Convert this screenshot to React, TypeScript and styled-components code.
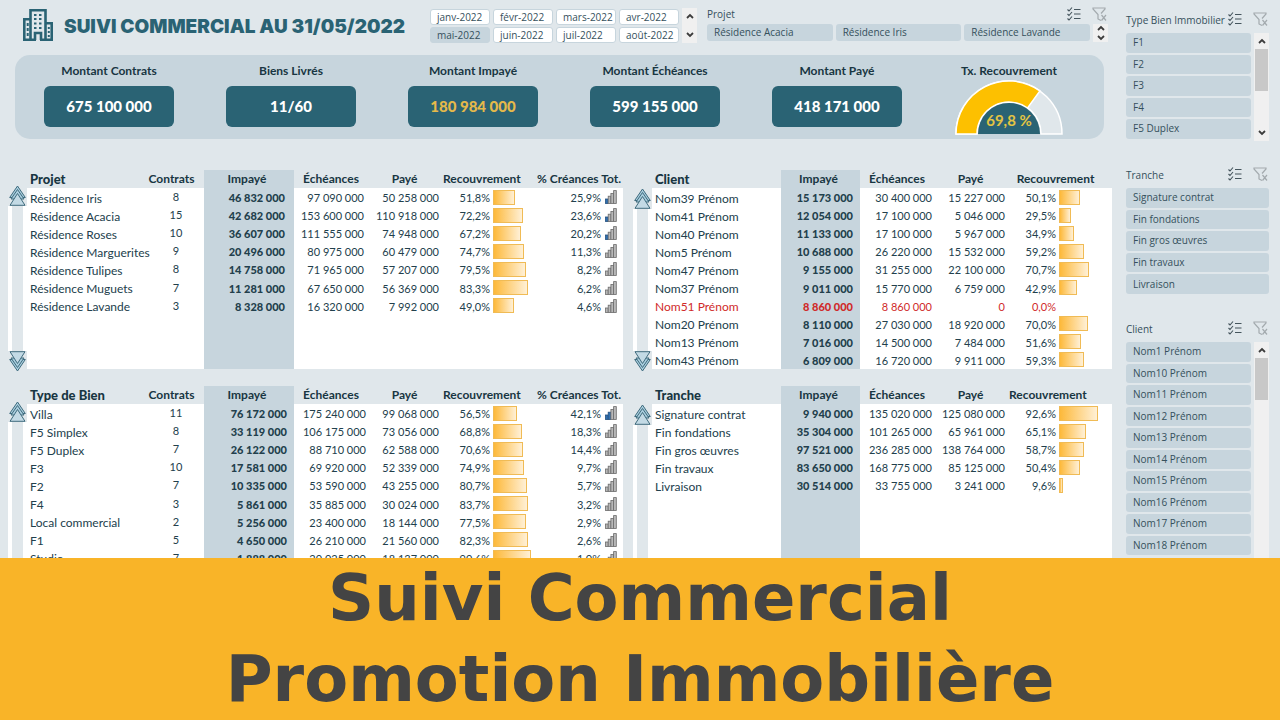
import React from "react";
import styled, { createGlobalStyle, css } from "styled-components";

const c = {
  page: "#e0e7eb",
  panel: "#c7d5dd",
  teal: "#2a6374",
  ink: "#22404c",
  inkStrong: "#183642",
  red: "#d02a2a",
  amber: "#f9b428",
};

const Global = createGlobalStyle`
  *, *::before, *::after { box-sizing: border-box; }
  body { margin: 0; background: ${c.page}; color: ${c.ink}; font-family: Lato, "Liberation Sans", sans-serif; font-size: 12px; }
  button { font: inherit; color: inherit; border: 0; padding: 0; background: none; cursor: pointer; }
  h1, h2, p { margin: 0; }
`;

const Page = styled.div`
  display: flex;
  flex-direction: column;
  height: 100vh;
`;

const Dashboard = styled.div`
  flex: 1;
  min-height: 0;
  overflow: hidden;
  display: flex;
  gap: 14px;
  padding: 0 10px 0 8px;
`;

const Main = styled.main`
  flex: 1;
  min-width: 0;
`;

const Sidebar = styled.aside`
  width: 144px;
  flex: none;
  display: flex;
  flex-direction: column;
  gap: 20px;
  padding-top: 6px;
`;

const TopBar = styled.header`
  display: flex;
  align-items: flex-start;
  gap: 10px;
  height: 55px;
  padding: 4px 3px 0 15px;
`;

const Brand = styled.div`
  flex: 1;
  display: flex;
  align-items: center;
  gap: 11px;
  height: 42px;
`;

const Title = styled.h1`
  font: 900 19px/24px Inter, "Liberation Sans", sans-serif;
  color: ${c.teal};
  white-space: nowrap;
  padding-top: 3px;
`;

const MonthSlicer = styled.section`
  display: flex;
  gap: 3px;
  width: 267px;
  padding-top: 4px;
`;

const MonthGrid = styled.div`
  flex: 1;
  display: grid;
  grid-template-columns: repeat(4, 1fr);
  gap: 2px 3px;
  padding-top: 1px;
`;

const slicerText = css`
  font-family: "Open Sans", "Noto Sans", sans-serif;
  font-size: 10px;
  color: #35505c;
  white-space: nowrap;
`;

const MonthButton = styled.button<{ $active?: boolean }>`
  ${slicerText}
  height: 16px;
  line-height: 14px;
  padding-left: 6px;
  text-align: left;
  border-radius: 3px;
  border: 1px solid ${c.panel};
  background: ${(p) => (p.$active ? c.panel : "#fff")};
`;

const Slicer = styled.section<{ $width?: number }>`
  ${(p) => p.$width && `width: ${p.$width}px;`}
`;

const SlicerHead = styled.div<{ $height: number }>`
  display: flex;
  align-items: center;
  height: ${(p) => p.$height}px;
  padding-right: 1px;
`;

const SlicerTitle = styled.h2`
  ${slicerText}
  flex: 1;
  min-width: 0;
  font-weight: 400;
`;

const SlicerTools = styled.div`
  display: flex;
  gap: 11px;
`;

const IconButton = styled.button`
  display: flex;
`;

const SlicerBody = styled.div<{ $height: number }>`
  display: flex;
  gap: 3px;
  height: ${(p) => p.$height}px;
  overflow: hidden;
  padding-right: 1px;
`;

const SlicerList = styled.div<{ $height: number; $columns?: number }>`
  flex: 1;
  display: grid;
  grid-template-columns: repeat(${(p) => p.$columns ?? 1}, 1fr);
  grid-auto-rows: 1fr;
  gap: 2px 3px;
  height: ${(p) => p.$height}px;
`;

const SlicerItem = styled.button`
  ${slicerText}
  min-height: 0;
  padding: 0 0 1px 7px;
  line-height: 14px;
  text-align: left;
  border-radius: 3px;
  background: ${c.panel};
`;

const ScrollBar = styled.div`
  width: 15px;
  flex: none;
  display: flex;
  flex-direction: column;
  justify-content: space-between;
  background: #f0f0f0;
`;

const ScrollButton = styled.button<{ $tight?: boolean }>`
  display: flex;
  align-items: center;
  justify-content: center;
  height: ${(p) => (p.$tight ? 8 : 16)}px;
`;

const Thumb = styled.div`
  height: 42px;
  background: #c8c8c8;
  margin: 0 1px auto;
`;

const KpiPanel = styled.section`
  display: grid;
  grid-template-columns: repeat(5, 182fr) 162fr;
  height: 84px;
  margin: 0 8px 0 7px;
  padding: 7px 14px 0 3px;
  border-radius: 15px;
  background: ${c.panel};
`;

const Kpi = styled.div`
  display: flex;
  flex-direction: column;
  align-items: center;
`;

const KpiLabel = styled.h2`
  font-size: 12px;
  line-height: 18px;
  font-weight: 700;
  color: ${c.inkStrong};
`;

const KpiValue = styled.p<{ $alert?: boolean }>`
  width: 71%;
  margin-top: 6px;
  border-radius: 6px;
  background: ${c.teal};
  color: ${(p) => (p.$alert ? "#e5b94a" : "#fff")};
  font-size: 15px;
  line-height: 41px;
  font-weight: 900;
  text-align: center;
`;

const Tables = styled.div`
  display: grid;
  grid-template-columns: 615fr 479fr;
  gap: 17px 10px;
  margin-top: 31px;
`;

const Panel = styled.section`
  display: flex;
`;

const Gutter = styled.div<{ $top: number }>`
  width: 19px;
  flex: none;
  display: flex;
  flex-direction: column;
  align-items: center;
  margin: ${(p) => p.$top}px 0 -3px;
`;

const Track = styled.div`
  flex: 1;
  align-self: stretch;
  border: solid #fff;
  border-width: 0 4px;
`;

const ArrowButton = styled.button`
  display: flex;
`;

const DataTable = styled.table`
  flex: 1;
  width: 100%;
  height: 199px;
  table-layout: fixed;
  border-collapse: collapse;
  font-size: 11px;
  line-height: 14px;
`;

const Th = styled.th<{ $align?: string; $shade?: boolean; $padRight?: number; $big?: boolean }>`
  height: 18px;
  padding: 0 ${(p) => p.$padRight ?? 0}px 0 ${(p) => (p.$big ? 3 : 0)}px;
  font-size: ${(p) => (p.$big ? 13 : 12)}px;
  font-weight: ${(p) => (p.$big ? 900 : 700)};
  text-align: ${(p) => p.$align ?? "center"};
  white-space: nowrap;
  color: ${c.inkStrong};
  background: ${(p) => (p.$shade ? c.panel : c.page)};
`;

const Row = styled.tr<{ $alert?: boolean }>`
  color: ${(p) => (p.$alert ? c.red : c.ink)};
`;

const Td = styled.td<{ $align?: string; $padRight?: number }>`
  height: 18px;
  padding: 2px ${(p) => p.$padRight ?? 0}px 0 0;
  text-align: ${(p) => p.$align ?? "right"};
  white-space: nowrap;
  background: #fff;
`;

const NameTd = styled(Td)`
  padding: 3px 0 0 3px;
  font-size: 12px;
  text-align: left;
`;

const CountTd = styled(Td)`
  padding-top: 0;
  text-align: center;
`;

const DueTd = styled(Td)`
  font-weight: 900;
  background: ${c.panel};
`;

const BarTd = styled(Td)`
  padding: 0 0 0 1px;
  text-align: left;
`;

const Bar = styled.div`
  height: 15px;
  border: 1px solid #f0bb55;
  background: linear-gradient(90deg, #fdb93a, #fff0d6);
`;

const Banner = styled.footer`
  flex: none;
  height: 162px;
  background: ${c.amber};
  color: #444;
  text-align: center;
  font: 700 64px/81px "DejaVu Sans", sans-serif;
  white-space: nowrap;
`;

const BuildingIcon = () => (
  <svg width="30" height="32" viewBox="0 0 30 32" fill="none" stroke={c.teal} strokeWidth="2.600" aria-hidden="true">
    <path d="M7.500 30V1.300h15V30M7.500 10.300H1.300V30M22.500 14.300h6.200V30M0 30.700h13M17 30.700h13M12 31v-7h6v7" />
    <path d="M11 5h2.500v2H11zM16 5h2.500v2H16zM11 9h2.500v2H11zM16 9h2.500v2H16zM11 13.500h2.500v2H11zM16 13.500h2.500v2H16zM11 18h2.500v2H11zM16 18h2.500v2H16z" fill={c.teal} stroke="none" />
    <path d="M4.700 14v3M4.700 19v3M4.700 24v3M25.800 18v2M25.800 22v2M25.800 26v2" strokeWidth="2" />
  </svg>
);

const ChecklistIcon = () => (
  <svg width="14" height="14" viewBox="0 0 14 14" fill="none" stroke="#45555d" strokeWidth="1.1" aria-hidden="true">
    <path d="M.5 2.5 2 4 5 .5M.5 7 2 8.500 5 5M.5 11.500 2 13 5 9.500M7 2.500h6.500M7 7h6.500M7 11.500h6.500" />
  </svg>
);

const ClearFilterIcon = () => (
  <svg width="16" height="15" viewBox="0 0 16 15" fill="none" stroke="#a3aaae" strokeWidth="1.200" aria-hidden="true">
    <path d="M9 13.500 6 12V7.500L1 2V1h12v1L9 6.500" />
    <path d="M9.500 8l4.500 5.500M14 8l-4.500 5.500" />
  </svg>
);

const Chevron = ({ down }: { down?: boolean }) => (
  <svg width="8" height="6" viewBox="0 0 8 6" fill="none" stroke="#3c3c3c" strokeWidth="1.800" aria-hidden="true">
    <path d={down ? "M1 1l3 3 3-3" : "M1 5l3-3 3 3"} />
  </svg>
);

const DoubleArrow = ({ down }: { down?: boolean }) => (
  <svg width="17" height="21" viewBox="0 0 17 21" fill="#a9cddd" stroke="#3f6b7d" strokeWidth="1" aria-hidden="true">
    <g transform={down ? "rotate(180 8.500 10.500)" : undefined}>
      <path d="M8.500 1 16.300 12.500H.7z" />
      <path d="M8.500 4.500 15 14H2z" />
      <path d="M8.500 8.500 16 20.300H1z" fill="#c3dae5" />
    </g>
  </svg>
);

const SignalIcon = ({ level }: { level: number }) => (
  <svg width="13" height="14" viewBox="0 0 13 14" strokeWidth=".8" aria-hidden="true" style={{ display: "block" }}>
    {[0, 1, 2, 3].map((i) => (
      <rect
        key={i}
        x={1.5 + i * 2.7}
        y={9 - i * 2.8}
        width="2.700"
        height={4.5 + i * 2.8}
        fill={i < level ? "#2f6fb0" : "#b8b8b8"}
        stroke={i < level ? "#24507f" : "#6c6c6c"}
      />
    ))}
  </svg>
);

const Gauge = () => (
  <svg width="108" height="55" viewBox="0 1 108 55" role="img" aria-label="69,8 %">
    <path d="M1 55a53 53 0 0 1 106 0H86a32 32 0 0 0-64 0z" fill="#e0e7eb" stroke="#fff" strokeWidth="1.500" />
    <path d="M1 55a53 53 0 0 1 83.900-43.100L72.600 29A32 32 0 0 0 22 55z" fill="#fdc000" stroke="#fff" strokeWidth="1.500" />
    <path d="M23 55a31 31 0 0 1 62 0z" fill={c.teal} />
    <text x="54" y="47" textAnchor="middle" fontFamily="Lato, sans-serif" fontWeight="700" fontSize="15" fill="#e3c443">
      69,8 %
    </text>
  </svg>
);

const Scroll = ({ tight, thumb }: { tight?: boolean; thumb?: boolean }) => (
  <ScrollBar>
    <ScrollButton $tight={tight} aria-label="Monter"><Chevron /></ScrollButton>
    {thumb && <Thumb />}
    <ScrollButton $tight={tight} aria-label="Descendre"><Chevron down /></ScrollButton>
  </ScrollBar>
);

type SlicerBoxProps = {
  title: string;
  items: string[];
  headHeight?: number;
  bodyHeight: number;
  listHeight: number;
  columns?: number;
  width?: number;
  scroll?: "tight" | "thumb";
};

const SlicerBox = ({ title, items, headHeight = 27, bodyHeight, listHeight, columns, width, scroll }: SlicerBoxProps) => (
  <Slicer $width={width}>
    <SlicerHead $height={headHeight}>
      <SlicerTitle>{title}</SlicerTitle>
      <SlicerTools>
        <IconButton aria-label="Sélection multiple"><ChecklistIcon /></IconButton>
        <IconButton aria-label="Effacer le filtre"><ClearFilterIcon /></IconButton>
      </SlicerTools>
    </SlicerHead>
    <SlicerBody $height={bodyHeight}>
      <SlicerList $height={listHeight} $columns={columns}>
        {items.map((t, i) => <SlicerItem key={i}>{t}</SlicerItem>)}
      </SlicerList>
      {scroll && <Scroll tight={scroll === "tight"} thumb={scroll === "thumb"} />}
    </SlicerBody>
  </Slicer>
);

type Line = {
  name: string;
  count?: string;
  due: string;
  planned: string;
  paid: string;
  rate: number;
  share?: string;
  level?: number;
};

const line = (name: string, due: string, planned: string, paid: string, rate: number, count?: string, share?: string, level = 0): Line =>
  ({ name, due, planned, paid, rate, count, share, level });

const projects = [
  line("Résidence Iris", "46 832 000", "97 090 000", "50 258 000", 51.8, "8", "25,9%", 1),
  line("Résidence Acacia", "42 682 000", "153 600 000", "110 918 000", 72.2, "15", "23,6%", 1),
  line("Résidence Roses", "36 607 000", "111 555 000", "74 948 000", 67.2, "10", "20,2%", 1),
  line("Résidence Marguerites", "20 496 000", "80 975 000", "60 479 000", 74.7, "9", "11,3%"),
  line("Résidence Tulipes", "14 758 000", "71 965 000", "57 207 000", 79.5, "8", "8,2%"),
  line("Résidence Muguets", "11 281 000", "67 650 000", "56 369 000", 83.3, "7", "6,2%"),
  line("Résidence Lavande", "8 328 000", "16 320 000", "7 992 000", 49, "3", "4,6%"),
];

const clients = [
  line("Nom39 Prénom", "15 173 000", "30 400 000", "15 227 000", 50.1),
  line("Nom41 Prénom", "12 054 000", "17 100 000", "5 046 000", 29.5),
  line("Nom40 Prénom", "11 133 000", "17 100 000", "5 967 000", 34.9),
  line("Nom5 Prénom", "10 688 000", "26 220 000", "15 532 000", 59.2),
  line("Nom47 Prénom", "9 155 000", "31 255 000", "22 100 000", 70.7),
  line("Nom37 Prénom", "9 011 000", "15 770 000", "6 759 000", 42.9),
  line("Nom51 Prénom", "8 860 000", "8 860 000", "0", 0),
  line("Nom20 Prénom", "8 110 000", "27 030 000", "18 920 000", 70),
  line("Nom13 Prénom", "7 016 000", "14 500 000", "7 484 000", 51.6),
  line("Nom43 Prénom", "6 809 000", "16 720 000", "9 911 000", 59.3),
];

const types = [
  line("Villa", "76 172 000", "175 240 000", "99 068 000", 56.5, "11", "42,1%", 2),
  line("F5 Simplex", "33 119 000", "106 175 000", "73 056 000", 68.8, "8", "18,3%"),
  line("F5 Duplex", "26 122 000", "88 710 000", "62 588 000", 70.6, "7", "14,4%"),
  line("F3", "17 581 000", "69 920 000", "52 339 000", 74.9, "10", "9,7%"),
  line("F2", "10 335 000", "53 590 000", "43 255 000", 80.7, "7", "5,7%"),
  line("F4", "5 861 000", "35 885 000", "30 024 000", 83.7, "3", "3,2%"),
  line("Local commercial", "5 256 000", "23 400 000", "18 144 000", 77.5, "2", "2,9%"),
  line("F1", "4 650 000", "26 210 000", "21 560 000", 82.3, "5", "2,6%"),
  line("Studio", "1 888 000", "20 025 000", "18 137 000", 90.6, "7", "1,0%"),
];

const stages = [
  line("Signature contrat", "9 940 000", "135 020 000", "125 080 000", 92.6),
  line("Fin fondations", "35 304 000", "101 265 000", "65 961 000", 65.1),
  line("Fin gros œuvres", "97 521 000", "236 285 000", "138 764 000", 58.7),
  line("Fin travaux", "83 650 000", "168 775 000", "85 125 000", 50.4),
  line("Livraison", "30 514 000", "33 755 000", "3 241 000", 9.6),
];

const ROWS = 10;
const wideCols = [121, 56, 90, 76, 73, 49, 43, 68, 20];
const narrowCols = [129, 79, 76, 73, 49, 54];

type TablePanelProps = { title: string; rows: Line[]; wide?: boolean; duePad?: number; rateAlign?: string };

const TablePanel = ({ title, rows, wide, duePad = 7, rateAlign = "left" }: TablePanelProps) => (
  <Panel>
    <Gutter $top={wide ? 15 : 18}>
      <ArrowButton aria-label="Monter"><DoubleArrow /></ArrowButton>
      <Track />
      <ArrowButton aria-label="Descendre"><DoubleArrow down /></ArrowButton>
    </Gutter>
    <DataTable>
      <colgroup>
        {(wide ? wideCols : narrowCols).map((w, i) => <col key={i} width={w} />)}
      </colgroup>
      <thead>
        <tr>
          <Th $align="left" $big>{title}</Th>
          {wide && <Th $padRight={9}>Contrats</Th>}
          <Th $shade $padRight={4}>Impayé</Th>
          <Th $padRight={2}>Échéances</Th>
          <Th $padRight={4}>Payé</Th>
          <Th colSpan={2} $align={rateAlign} $padRight={10}>Recouvrement</Th>
          {wide && <Th colSpan={2}>% Créances Tot.</Th>}
        </tr>
      </thead>
      <tbody>
        {Array.from({ length: ROWS }, (_, i) => {
          const r = rows[i];
          return (
            <Row key={i} $alert={r?.rate === 0}>
              <NameTd>{r?.name}</NameTd>
              {wide && <CountTd>{r?.count}</CountTd>}
              <DueTd $padRight={duePad}>{r?.due}</DueTd>
              <Td $padRight={wide ? duePad - 3 : 4}>{r?.planned}</Td>
              <Td $padRight={4}>{r?.paid}</Td>
              <Td $padRight={2}>{r && `${r.rate.toFixed(1).replace(".", ",")}%`}</Td>
              <BarTd>{r && r.rate > 0 && <Bar style={{ width: `${Math.round(r.rate * 0.42)}px` }} />}</BarTd>
              {wide && <Td $padRight={2}>{r?.share}</Td>}
              {wide && <BarTd>{r && <SignalIcon level={r.level ?? 0} />}</BarTd>}
            </Row>
          );
        })}
      </tbody>
    </DataTable>
  </Panel>
);

const months = ["janv-2022", "févr-2022", "mars-2022", "avr-2022", "mai-2022", "juin-2022", "juil-2022", "août-2022"];

const kpis = [
  { label: "Montant Contrats", value: "675 100 000" },
  { label: "Biens Livrés", value: "11/60" },
  { label: "Montant Impayé", value: "180 984 000", alert: true },
  { label: "Montant Échéances", value: "599 155 000" },
  { label: "Montant Payé", value: "418 171 000" },
];

export default function App() {
  return (
    <Page>
      <Global />
      <Dashboard>
        <Main>
          <TopBar>
            <Brand>
              <BuildingIcon />
              <Title>SUIVI COMMERCIAL AU 31/05/2022</Title>
            </Brand>
            <MonthSlicer>
              <MonthGrid>
                {months.map((m) => <MonthButton key={m} $active={m === "mai-2022"}>{m}</MonthButton>)}
              </MonthGrid>
              <Scroll />
            </MonthSlicer>
            <SlicerBox
              title="Projet"
              items={["Résidence Acacia", "Résidence Iris", "Résidence Lavande"]}
              headHeight={20}
              bodyHeight={18}
              listHeight={17}
              columns={3}
              width={402}
              scroll="tight"
            />
          </TopBar>
          <KpiPanel>
            {kpis.map((k) => (
              <Kpi key={k.label}>
                <KpiLabel>{k.label}</KpiLabel>
                <KpiValue $alert={k.alert}>{k.value}</KpiValue>
              </Kpi>
            ))}
            <Kpi>
              <KpiLabel>Tx. Recouvrement</KpiLabel>
              <Gauge />
            </Kpi>
          </KpiPanel>
          <Tables>
            <TablePanel title="Projet" rows={projects} wide duePad={9} />
            <TablePanel title="Client" rows={clients} rateAlign="center" />
            <TablePanel title="Type de Bien" rows={types} wide />
            <TablePanel title="Tranche" rows={stages} />
          </Tables>
        </Main>
        <Sidebar>
          <SlicerBox title="Type Bien Immobilier" items={["F1", "F2", "F3", "F4", "F5 Duplex", "F5 Simplex"]} bodyHeight={108} listHeight={127} scroll="thumb" />
          <SlicerBox title="Tranche" items={["Signature contrat", "Fin fondations", "Fin gros œuvres", "Fin travaux", "Livraison"]} bodyHeight={107} listHeight={106} />
          <SlicerBox
            title="Client"
            items={["Nom1 Prénom", "Nom10 Prénom", "Nom11 Prénom", "Nom12 Prénom", "Nom13 Prénom", "Nom14 Prénom", "Nom15 Prénom", "Nom16 Prénom", "Nom17 Prénom", "Nom18 Prénom"]}
            bodyHeight={235}
            listHeight={213}
            scroll="thumb"
          />
        </Sidebar>
      </Dashboard>
      <Banner>
        <div>Suivi Commercial</div>
        <div>Promotion Immobilière</div>
      </Banner>
    </Page>
  );
}
